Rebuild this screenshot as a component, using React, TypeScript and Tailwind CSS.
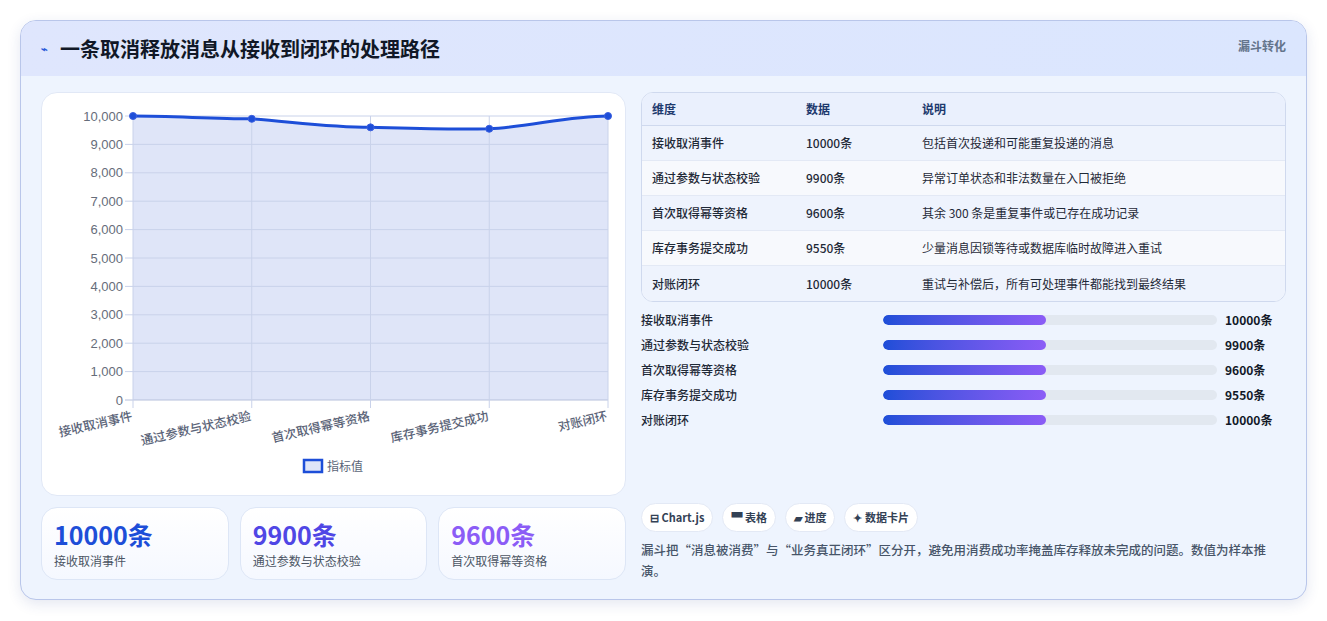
const font = { fontFamily: '"Noto Sans CJK SC", "Noto Sans", sans-serif' };

const rows = [
  ["接收取消事件", "10000条", "包括首次投递和可能重复投递的消息"],
  ["通过参数与状态校验", "9900条", "异常订单状态和非法数量在入口被拒绝"],
  ["首次取得幂等资格", "9600条", "其余 300 条是重复事件或已存在成功记录"],
  ["库存事务提交成功", "9550条", "少量消息因锁等待或数据库临时故障进入重试"],
  ["对账闭环", "10000条", "重试与补偿后，所有可处理事件都能找到最终结果"],
];

function Chart() {
  const x0 = 91, x1 = 566, yb = 307, k = 0.0284;
  const vals = [10000, 9900, 9600, 9550, 10000];
  const xs = vals.map((_, i) => x0 + ((x1 - x0) / 4) * i);
  const ys = vals.map((v) => yb - v * k);
  const line = `M${xs[0]},${ys[0]} C${xs[0] + 40},${ys[0]} ${xs[1] - 40},${ys[1]} ${xs[1]},${ys[1]} C${xs[1] + 40},${ys[1] + 3} ${xs[2] - 40},${ys[2]} ${xs[2]},${ys[2]} C${xs[2] + 40},${ys[2] + 1} ${xs[3] - 40},${ys[3] + 1} ${xs[3]},${ys[3]} C${xs[3] + 40},${ys[3] - 2} ${xs[4] - 40},${ys[4]} ${xs[4]},${ys[4]}`;
  const labels = ["接收取消事件", "通过参数与状态校验", "首次取得幂等资格", "库存事务提交成功", "对账闭环"];
  return (
    <svg width="585" height="404" viewBox="0 0 585 404" style={font}>
      <path d={`${line} L${x1},${yb} L${x0},${yb} Z`} fill="#dfe5f8" />
      {Array.from({ length: 11 }).map((_, i) => {
        const y = yb - i * 1000 * k;
        return (
          <g key={i}>
            <line x1={x0 - 8} x2={x1} y1={y} y2={y} stroke={i === 0 ? "#b6c0dc" : "#c9d2ea"} strokeWidth="1" />
            <text x={x0 - 10} y={y + 4.5} textAnchor="end" fontSize="13" fill="#666d7a" style={{ fontFamily: '"Liberation Sans", sans-serif' }}>
              {(i * 1000).toLocaleString("en-US")}
            </text>
          </g>
        );
      })}
      {xs.map((x, i) => (
        <line key={i} x1={x} x2={x} y1={ys[0]} y2={yb + 8} stroke="#c9d2ea" />
      ))}
      <path d={line} fill="none" stroke="#1d4ed8" strokeWidth="3" />
      {xs.map((x, i) => (
        <circle key={i} cx={x} cy={ys[i]} r="3.5" fill="#1d4ed8" stroke="#3b5fe0" strokeWidth="1" />
      ))}
      {labels.map((l, i) => (
        <text key={i} x={xs[i]} y={yb + 20} textAnchor="end" fontSize="12.5" fontWeight="500" fill="#5b6478" transform={`rotate(-13 ${xs[i]} ${yb + 20})`}>
          {l}
        </text>
      ))}
      <rect x="262" y="367" width="18" height="12" fill="#dfe5f8" stroke="#1d4ed8" strokeWidth="2.5" />
      <text x="285" y="378" fontSize="12" fill="#5b6478">指标值</text>
    </svg>
  );
}

export default function App() {
  return (
    <div className="w-[1327px] h-[621px] bg-white pt-5 pl-5" style={font}>
      <div className="w-[1287px] h-[580px] rounded-2xl border border-[#b9c6ea] bg-[#eef4fe] overflow-hidden shadow-[0_4px_14px_rgba(30,60,140,0.12)]">
        <div className="h-[55px] bg-gradient-to-r from-[#dfe6fd] to-[#dbe6fe] flex items-center justify-between pl-5 pr-5">
          <div className="flex items-center gap-3 text-[20px] font-bold text-[#111827]">
            <span className="text-[#2b5bd9] text-[11px]">⌁</span>
            一条取消释放消息从接收到闭环的处理路径
          </div>
          <div className="text-[12px] font-bold text-[#64748b] self-start mt-4">漏斗转化</div>
        </div>
        <div className="flex gap-[15px] px-5 pt-4">
          <div className="w-[585px] flex flex-col gap-[11px]">
            <div className="h-[404px] bg-white rounded-2xl border border-[#e1e8f6]">
              <Chart />
            </div>
            <div className="flex gap-[11px]">
              {[
                ["10000条", "接收取消事件", "text-[#1d4ed8]"],
                ["9900条", "通过参数与状态校验", "text-[#4f46e5]"],
                ["9600条", "首次取得幂等资格", "text-[#8b5cf6]"],
              ].map(([v, l, c]) => (
                <div key={l} className="w-[188px] h-[73px] rounded-2xl border border-[#dde6f6] bg-gradient-to-b from-white to-[#f5f8ff] px-3 pt-2.5">
                  <div className={`text-[25px] leading-[32px] font-bold ${c}`}>{v}</div>
                  <div className="text-[12px] text-[#4b5563] mt-0.5">{l}</div>
                </div>
              ))}
            </div>
          </div>
          <div className="w-[647px] flex flex-col">
            <div className="rounded-xl border border-[#cfd9ee] overflow-hidden bg-white text-[12px]">
              <div className="flex h-[33px] items-center bg-[#eaf0fd] font-bold text-[#1e3a6e] border-b border-[#cfd9ee]">
                <div className="w-[164px] pl-2.5">维度</div>
                <div className="w-[116px]">数据</div>
                <div>说明</div>
              </div>
              {rows.map((r, i) => (
                <div key={i} className={`flex h-[35px] items-center text-[#1f2937] ${i % 2 ? "bg-[#f7f9fd]" : "bg-[#eef3fd]"} ${i < 4 ? "border-b border-[#e3e9f5]" : ""}`}>
                  <div className="w-[164px] pl-2.5 font-medium">{r[0]}</div>
                  <div className="w-[116px] font-medium">{r[1]}</div>
                  <div>{r[2]}</div>
                </div>
              ))}
            </div>
            <div className="mt-[9px] flex flex-col gap-[7px]">
              {rows.map((r) => (
                <div key={r[0]} className="flex items-center h-[18px] text-[12px]">
                  <div className="w-[242px] text-[#1f2937] font-medium">{r[0]}</div>
                  <div className="w-[334px] h-[10px] rounded-full bg-[#e2e8f0] overflow-hidden">
                    <div className="w-[163px] h-full rounded-full bg-gradient-to-r from-[#1d4ed8] to-[#8b5cf6]" />
                  </div>
                  <div className="ml-2 font-bold text-[#111827]">{r[1]}</div>
                </div>
              ))}
            </div>
            <div className="flex gap-[9px] mt-[74px] text-[11px] font-bold text-[#334155]">
              {["⊟ Chart.js", "▀ 表格", "▰ 进度", "✦ 数据卡片"].map((c) => (
                <div key={c} className="h-[29px] px-2 rounded-full bg-white border border-[#e3e9f5] flex items-center">{c}</div>
              ))}
            </div>
            <div className="mt-[7px] text-[12.5px] font-medium leading-[21px] text-[#475569] pr-3">
              漏斗把“消息被消费”与“业务真正闭环”区分开，避免用消费成功率掩盖库存释放未完成的问题。数值为样本推演。
            </div>
          </div>
        </div>
      </div>
    </div>
  );
}
